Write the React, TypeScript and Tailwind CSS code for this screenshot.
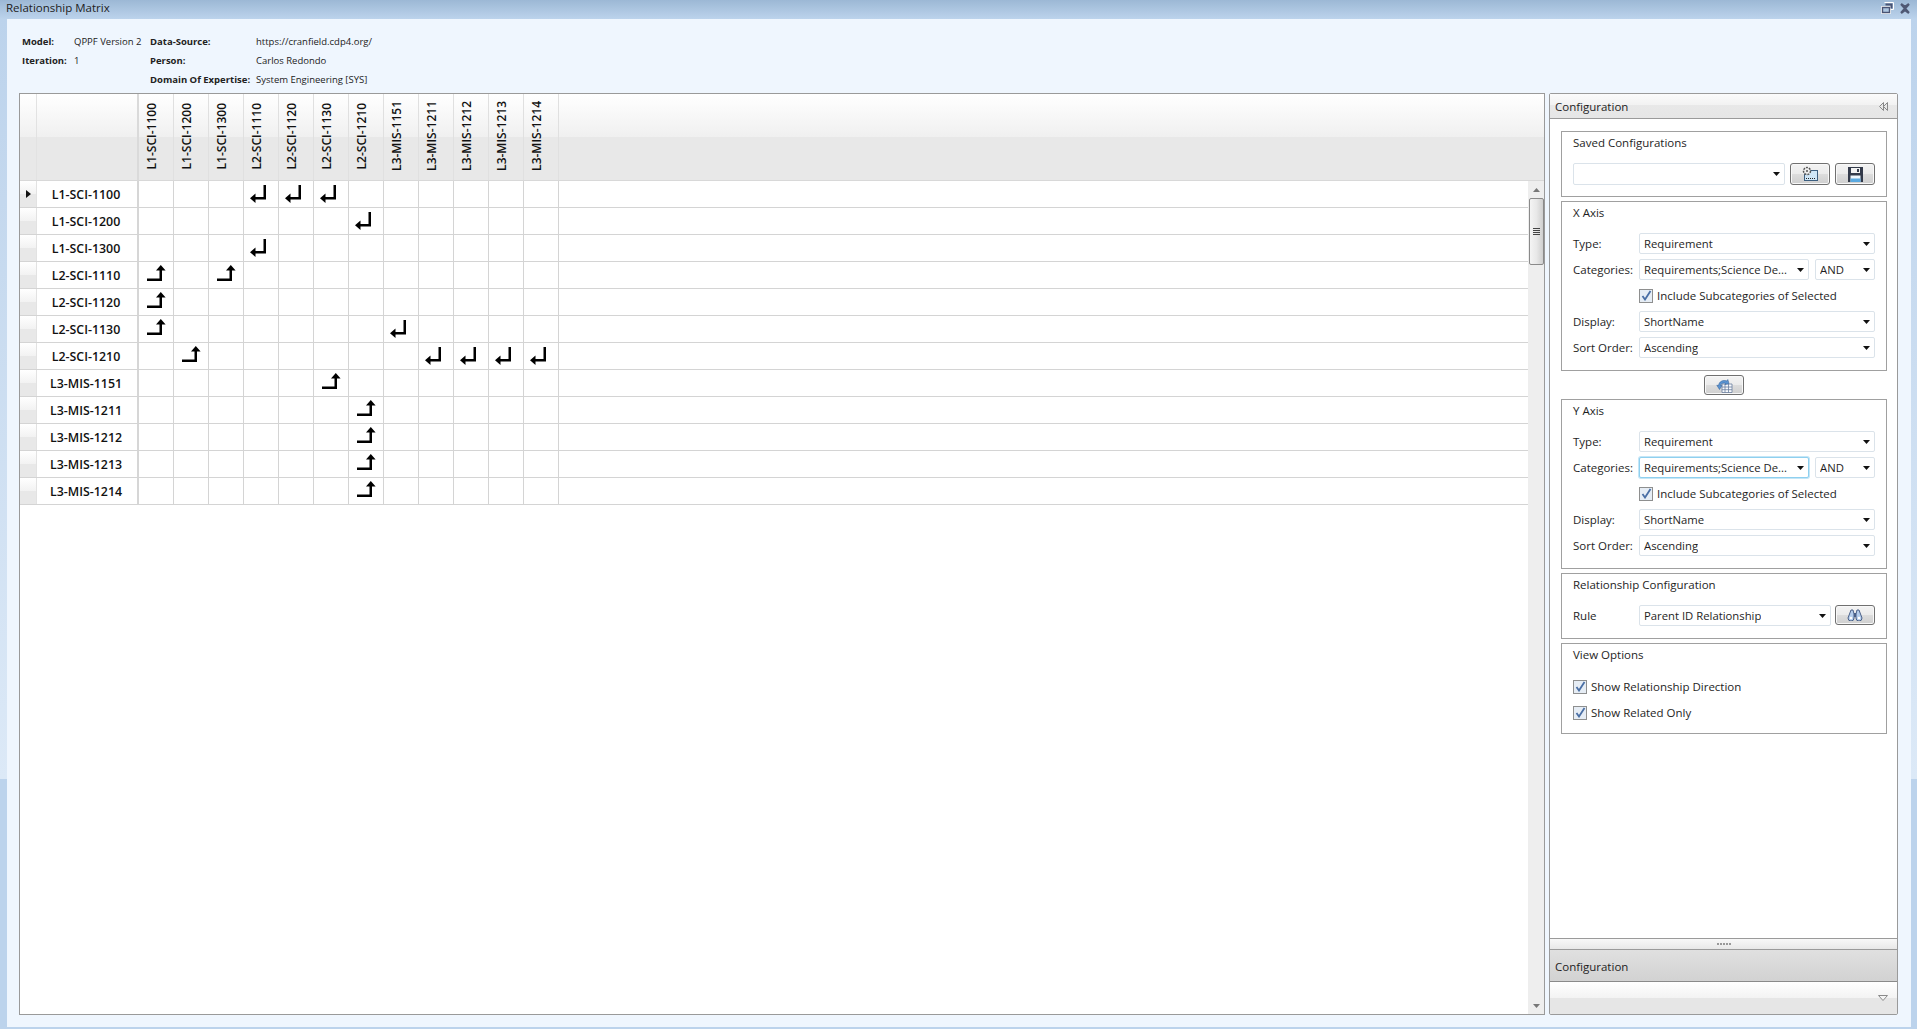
import React from "react";

const cols = ["L1-SCI-1100","L1-SCI-1200","L1-SCI-1300","L2-SCI-1110","L2-SCI-1120","L2-SCI-1130","L2-SCI-1210","L3-MIS-1151","L3-MIS-1211","L3-MIS-1212","L3-MIS-1213","L3-MIS-1214"];
const rows: { name: string; down?: number[]; up?: number[] }[] = [
  { name: "L1-SCI-1100", down: [3, 4, 5] },
  { name: "L1-SCI-1200", down: [6] },
  { name: "L1-SCI-1300", down: [3] },
  { name: "L2-SCI-1110", up: [0, 2] },
  { name: "L2-SCI-1120", up: [0] },
  { name: "L2-SCI-1130", up: [0], down: [7] },
  { name: "L2-SCI-1210", up: [1], down: [8, 9, 10, 11] },
  { name: "L3-MIS-1151", up: [5] },
  { name: "L3-MIS-1211", up: [6] },
  { name: "L3-MIS-1212", up: [6] },
  { name: "L3-MIS-1213", up: [6] },
  { name: "L3-MIS-1214", up: [6] },
];

const ArrowDown = () => (
  <svg width="16" height="18" viewBox="0 0 16 18" className="absolute left-[6px] top-[4px]">
    <path d="M13.5 0H16v14.5H4V12h9.5z M0 13.2l5.5-4.7v9.4z" fill="#000" />
  </svg>
);
const ArrowUp = () => (
  <svg width="19" height="16" viewBox="0 0 19 16" className="absolute left-[8px] top-[3px]">
    <path d="M0 13.5h12.5V4H15v12H0z M13.8 0l4.8 5.5H9z" fill="#000" />
  </svg>
);

const Caret = () => (
  <svg width="7" height="4" viewBox="0 0 7 4" className="shrink-0"><path d="M0 0h7L3.5 4z" fill="#111" /></svg>
);

function Combo({ text, className, focus }: { text?: string; className: string; focus?: boolean }) {
  return (
    <div className={`flex items-center justify-between rounded-[2px] border bg-white pl-[4px] pr-[4px] h-[21px] ${focus ? "border-[#8fd0ef] shadow-[0_0_0_1px_#c4e6f7]" : "border-[#dbe3ea]"} ${className}`}>
      <span className="whitespace-nowrap overflow-hidden pt-[1px] leading-[18px] text-[11.3px]">{text}</span>
      <Caret />
    </div>
  );
}

function Check({ label, className }: { label: string; className?: string }) {
  return (
    <div className={`flex items-center h-[21px] ${className ?? ""}`}>
      <div className="w-[14px] h-[14px] border border-[#8e8f8f] bg-[#e6edf5] mr-[4px] flex items-center justify-center shrink-0">
        <svg width="11" height="11" viewBox="0 0 11 11"><path d="M1.5 6l2.5 3.5L9.5 1" stroke="#4a6fa5" strokeWidth="1.8" fill="none" /></svg>
      </div>
      <span>{label}</span>
    </div>
  );
}

function Btn({ className, children }: { className: string; children: React.ReactNode }) {
  return (
    <div className={`flex items-center justify-center rounded-[3px] border border-[#707070] shadow-[inset_0_0_0_1px_#f8f8f8] bg-[linear-gradient(#f3f3f3_0%,#ebebeb_50%,#dddddd_50%,#cfcfcf_100%)] ${className}`}>
      {children}
    </div>
  );
}

function Group({ title, children, className }: { title: string; children: React.ReactNode; className?: string }) {
  return (
    <div className={`border border-[#a0a0a0] px-[11px] ${className ?? ""}`}>
      <div className="h-[31px] pt-[1px] leading-[20px]">{title}</div>
      {children}
    </div>
  );
}

function Label({ children }: { children: React.ReactNode }) {
  return <span className="w-[66px] pt-[1px]">{children}</span>;
}

function Axis({ title, focus }: { title: string; focus?: boolean }) {
  return (
    <Group title={title} className="pb-[12px]">
      <div className="flex flex-col gap-[5px]">
        <div className="flex items-center"><Label>Type:</Label><Combo text="Requirement" className="flex-1" /></div>
        <div className="flex items-center"><Label>Categories:</Label><Combo text="Requirements;Science De..." focus={focus} className="w-[170px]" /><Combo text="AND" className="w-[60px] ml-[6px]" /></div>
        <Check label="Include Subcategories of Selected" className="ml-[66px]" />
        <div className="flex items-center"><Label>Display:</Label><Combo text="ShortName" className="flex-1" /></div>
        <div className="flex items-center"><Label>Sort Order:</Label><Combo text="Ascending" className="flex-1" /></div>
      </div>
    </Group>
  );
}

export default function App() {
  return (
    <div className="w-[1917px] h-[1029px] overflow-hidden flex flex-col pb-[2px] px-[7px] pr-[6px] text-[#1e1e1e] text-[11.5px] font-['Open_Sans',sans-serif] bg-[linear-gradient(#9cb8d5_0px,#bcd3ec_19px,#c4d8ee_200px,#dce9f7_779px,#bcd3ec_779px,#bcd3ec_100%)]">
      <div className="h-[19px] -ml-[1px] pb-[3px] flex items-center justify-between shrink-0">
        <span className="text-[11.5px] text-[#222]">Relationship Matrix</span>
        <div className="flex items-center gap-[5px]">
          <svg width="13" height="12" viewBox="0 0 13 12"><path d="M3.5.5h9v7h-3M.5 4.5h9v7h-9z" fill="none" stroke="#fff" strokeWidth="1" /><path d="M4.5 1.5h7v5h-2V3.5h-5z" fill="#4a5474" /><path d="M1.5 5.5h7v5h-7z" fill="none" stroke="#4a5474" strokeWidth="1.4" /></svg>
          <svg width="12" height="11" viewBox="0 0 12 11"><path d="M2 1l4 3 4-3M2 10l4-3 4 3M2 1l8 9M10 1l-8 9" fill="none" stroke="#4f5874" strokeWidth="2.2" /></svg>
        </div>
      </div>
      <div className="flex-1 min-h-0 bg-[#eff6fe] flex flex-col pl-[12px] pr-[13px] pb-[12px]">
        <div className="grid grid-cols-[52px_76px_106px_1fr] auto-rows-[19px] items-center pt-[13px] pl-[3px] pb-[4px] text-[9.5px] text-[#222] shrink-0 leading-none">
          <b>Model:</b><span>QPPF Version 2</span><b>Data-Source:</b><span>https://cranfield.cdp4.org/</span>
          <b>Iteration:</b><span>1</span><b>Person:</b><span>Carlos Redondo</span>
          <span /><span /><b>Domain Of Expertise:</b><span>System Engineering [SYS]</span>
        </div>
        <div className="flex-1 min-h-0 flex gap-[4px]">
          <div className="w-[1526px] border border-[#9a9a9a] bg-white flex flex-col">
            <div className="h-[87px] shrink-0 flex bg-[linear-gradient(#ffffff_0%,#f0f0f0_50%,#e8e8e8_50%,#e8e8e8_100%)] border-b border-[#d8d8d8]">
              <div className="w-[17px] border-r border-[#e2e2e2] shrink-0" />
              <div className="w-[102px] border-r-[2px] border-[#dadada] shrink-0" />
              {cols.map((c) => (
                <div key={c} className="w-[35px] shrink-0 border-r border-[#e0e0e0] flex items-center justify-center pr-[9px] pb-[2px]">
                  <span className="[writing-mode:vertical-rl] rotate-180 font-semibold text-[12px] leading-none whitespace-nowrap text-[#111]">{c}</span>
                </div>
              ))}
            </div>
            <div className="flex-1 min-h-0 flex">
              <div className="flex-1 min-w-0">
                {rows.map((r, i) => (
                  <div key={r.name} className="h-[27px] flex border-b border-[#d4d4d4]">
                    <div className="w-[17px] shrink-0 border-r border-[#e2e2e2] flex items-center justify-center bg-[linear-gradient(#ffffff_0%,#f2f2f2_50%,#e8e8e8_50%,#e8e8e8_100%)]">
                      {i === 0 && <svg width="5" height="8" viewBox="0 0 5 8"><path d="M0 0l5 4-5 4z" fill="#111" /></svg>}
                    </div>
                    <div className="w-[102px] shrink-0 border-r-[2px] border-[#d6d6d6] pr-[2px] pt-[2px] flex items-center justify-center font-semibold text-[12.4px] text-[#111]">{r.name}</div>
                    {cols.map((c, j) => (
                      <div key={c} className="relative w-[35px] shrink-0 border-r border-[#d4d4d4]">
                        {r.down?.includes(j) && <ArrowDown />}
                        {r.up?.includes(j) && <ArrowUp />}
                      </div>
                    ))}
                  </div>
                ))}
              </div>
              <div className="w-[16px] shrink-0 bg-[#eeeeee] flex flex-col items-center">
                <svg width="7" height="4" viewBox="0 0 7 4" className="mt-[7px]"><path d="M3.5 0L7 4H0z" fill="#777" /></svg>
                <div className="mt-[6px] w-[15px] h-[67px] rounded-[2px] border border-[#8a8a8a] bg-[linear-gradient(90deg,#f4f4f4,#e8e8e8_50%,#cfcfcf)] flex flex-col items-center justify-center gap-[1px]">
                  <div className="w-[7px] h-[1px] bg-[#444]" /><div className="w-[7px] h-[1px] bg-[#444]" /><div className="w-[7px] h-[1px] bg-[#444]" /><div className="w-[7px] h-[1px] bg-[#444]" />
                </div>
                <svg width="7" height="4" viewBox="0 0 7 4" className="mt-auto mb-[6px]"><path d="M0 0h7L3.5 4z" fill="#777" /></svg>
              </div>
            </div>
          </div>
          <div className="w-[349px] border border-[#9a9a9a] rounded-[2px] bg-white flex flex-col">
            <div className="h-[25px] shrink-0 flex items-center justify-between pl-[5px] pr-[9px] pt-[1px] text-[11.5px] bg-[linear-gradient(#fbfbfb_0%,#f2f2f2_45%,#e8e8e8_45%,#e6e6e6_100%)] border-b border-[#9a9a9a]">
              <span>Configuration</span>
              <svg width="9" height="9" viewBox="0 0 9 9"><path d="M4.5 0.5L.5 4.5l4 4zM8.5 .5l-4 4 4 4z" fill="#e8e8e8" stroke="#888" /></svg>
            </div>
            <div className="flex-1 min-h-0 pt-[12px] pl-[11px] pr-[10px] flex flex-col">
              <Group title="Saved Configurations" className="pb-[11px]">
                <div className="flex items-center">
                  <Combo className="w-[212px] !h-[22px]" />
                  <Btn className="w-[40px] h-[22px] ml-[5px]">
                    <svg width="18" height="16" viewBox="0 0 18 16">
                      <rect x="3.5" y="4.5" width="13" height="10" fill="#cfe6f7" stroke="#3d5f80" />
                      <path d="M5 12.5h10" stroke="#222" strokeDasharray="1 1" />
                      <circle cx="6" cy="5" r="3.5" fill="#eee" stroke="#555" strokeWidth="1.5" strokeDasharray="2 1" />
                      <circle cx="6" cy="5" r="1" fill="#555" />
                    </svg>
                  </Btn>
                  <Btn className="w-[40px] h-[22px] ml-[5px]">
                    <svg width="15" height="15" viewBox="0 0 15 15">
                      <path d="M0 0h15v15H0z" fill="#333a4a" />
                      <path d="M3 1h9v5H3z" fill="#f2f2f2" />
                      <path d="M9 2h2v3H9z" fill="#333a4a" />
                      <path d="M2.5 8.5h10V15h-10z" fill="#eef6fc" />
                      <path d="M2.5 11.5h10V15h-10z" fill="#5aa9e0" />
                    </svg>
                  </Btn>
                </div>
              </Group>
              <div className="mt-[4px]"><Axis title="X Axis" /></div>
              <div className="flex justify-center my-[4px]">
                <Btn className="w-[40px] h-[20px]">
                  <svg width="17" height="15" viewBox="0 0 17 15">
                    <path d="M6 6h10v8.5H6zM9 6v8.5M12.5 6v8.5M6 9h10M6 11.7h10" fill="#f7f9fc" stroke="#6b7f9e" strokeWidth=".8" />
                    <path d="M11 3C7 1.5 3 3.5 2.5 7.5L.8 7.2 3.5 11.5 6 7.5l-1.6 0C5 5.5 7.5 4.5 9.5 5.3L9 6.5 13 5.5 11.8 1.5z" fill="#5a94d2" stroke="#2d5a94" strokeWidth=".5" />
                  </svg>
                </Btn>
              </div>
              <Axis title="Y Axis" focus />
              <Group title="Relationship Configuration" className="mt-[4px] pb-[12px]">
                <div className="flex items-start">
                  <span className="w-[66px] pt-[1px] leading-[20px]">Rule</span>
                  <Combo text="Parent ID Relationship" className="w-[192px]" />
                  <Btn className="w-[40px] h-[20px] ml-[4px]">
                    <svg width="16" height="12" viewBox="0 0 16 12">
                      <path d="M4 1l2 0 1 4v4a3 3 0 1 1-6 0zM12 1l-2 0-1 4v4a3 3 0 1 0 6 0z" fill="#b4cdec" stroke="#4a6088" strokeWidth="1" />
                      <path d="M7 4h2v4H7z" fill="#4a6088" />
                      <circle cx="4" cy="9" r="1.3" fill="#fff" /><circle cx="12" cy="9" r="1.3" fill="#fff" />
                    </svg>
                  </Btn>
                </div>
              </Group>
              <Group title="View Options" className="mt-[4px] pb-[10px]">
                <div className="flex flex-col gap-[5px] pt-[1px]">
                  <Check label="Show Relationship Direction" />
                  <Check label="Show Related Only" />
                </div>
              </Group>
            </div>
            <div className="h-[12px] shrink-0 border-y border-[#9a9a9a] bg-[linear-gradient(#f8f8f8,#e8e8e8)] flex items-center justify-center gap-[1px]">
              {[0, 1, 2, 3, 4].map((d) => <div key={d} className="w-[2px] h-[2px] bg-[#999]" />)}
            </div>
            <div className="h-[32px] shrink-0 flex items-center pl-[5px] pt-[2px] text-[11.5px] bg-[linear-gradient(#e0e0e0,#d2d2d2)] border-b border-[#8a8a8a]">Configuration</div>
            <div className="h-[32px] shrink-0 flex justify-end items-center pr-[9px] bg-[linear-gradient(#ffffff_0%,#f3f3f3_50%,#e6e6e6_50%,#e6e6e6_100%)] rounded-b-[2px]">
              <svg width="10" height="6" viewBox="0 0 10 6"><path d="M.5.5h9L5 5.5z" fill="#f4f4f4" stroke="#8a8a8a" /></svg>
            </div>
          </div>
        </div>
      </div>
    </div>
  );
}
